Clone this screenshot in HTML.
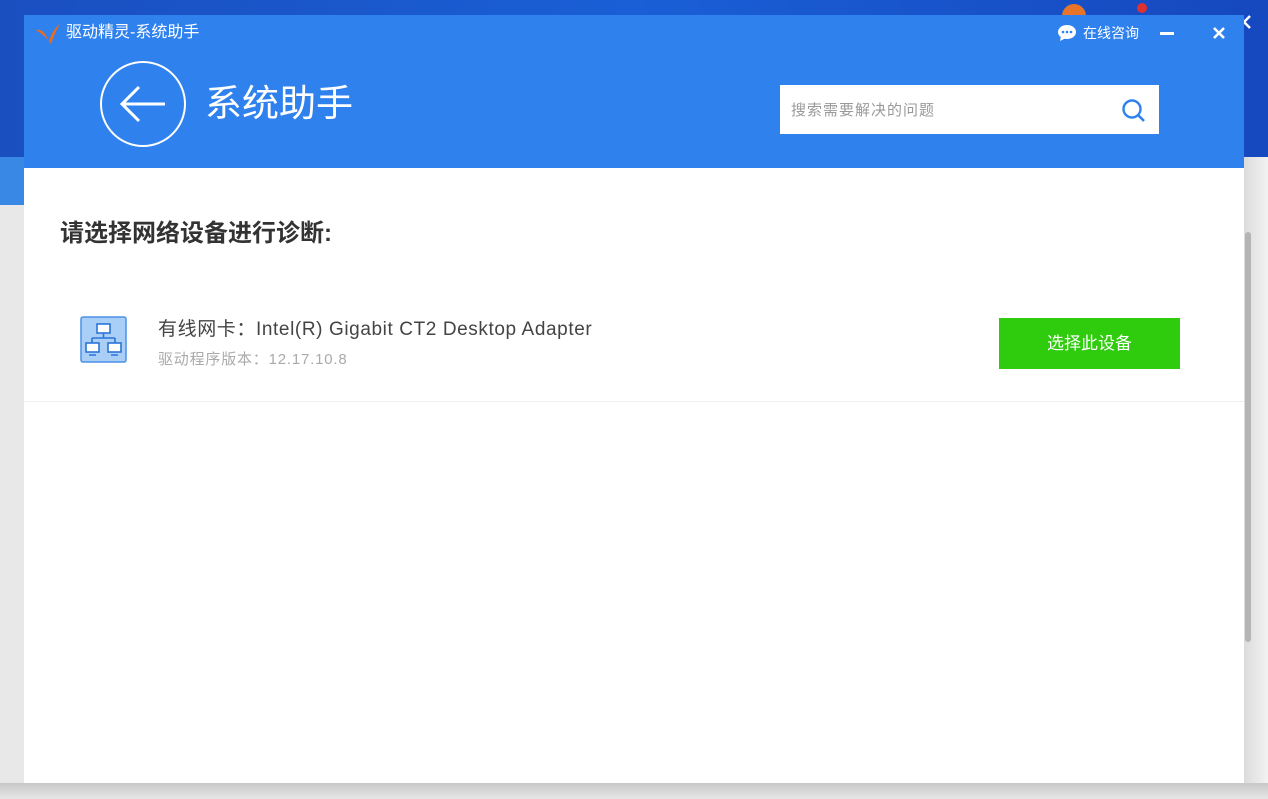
<!DOCTYPE html>
<html><head><meta charset="utf-8"><style>
*{margin:0;padding:0;box-sizing:border-box}
body{width:1268px;height:799px;overflow:hidden;position:relative;background:#e8e8e8;font-family:"Liberation Sans","Noto Sans CJK SC",sans-serif}
.bgtop{position:absolute;left:0;top:0;width:1268px;height:157px;background:linear-gradient(90deg,#1a4fc0,#1a5fd6 50%,#1648bf)}
.bgstrip{position:absolute;left:0;top:157px;width:24px;height:48px;background:#3a88e6}
.bgright{position:absolute;left:1244px;top:157px;width:24px;height:642px;background:linear-gradient(90deg,#dcdcdc,#f2f2f2)}
.bgbottom{position:absolute;left:0;top:783px;width:1268px;height:16px;background:linear-gradient(#c8c8c8,#e6e6e6)}
.scroll{position:absolute;left:1245px;top:232px;width:6px;height:410px;background:#b5b5b8;border-radius:3px}
.dlg{position:absolute;left:24px;top:15px;width:1220px;height:768px;background:#fff}
.hdr{position:absolute;left:0;top:0;width:1220px;height:153px;background:#2f82ee}
.title{position:absolute;left:42px;top:8px;color:#fff;font-size:16px;line-height:20px}
.back{position:absolute;left:76px;top:46px;width:86px;height:86px;border:2px solid #fff;border-radius:50%}
.big{position:absolute;left:181px;top:66px;color:#fff;font-size:37px;line-height:46px}
.search{position:absolute;left:756px;top:70px;width:379px;height:49px;background:#fff}
.search span{position:absolute;left:11px;top:14px;font-size:15px;color:#999;letter-spacing:1px}
.h2{position:absolute;left:36px;top:198px;font-size:24px;font-weight:bold;color:#333}
.name{position:absolute;left:134px;top:299px;font-size:19px;color:#444;letter-spacing:0.6px}
.ver{position:absolute;left:134px;top:333px;font-size:15px;color:#aaa;letter-spacing:0.8px}
.btn{position:absolute;left:975px;top:303px;width:181px;height:51px;background:#2ecc0c;color:#fff;font-size:17px;text-align:center;line-height:51px}
.line{position:absolute;left:0;top:386px;width:1220px;height:1px;background:#eceff3}
</style></head><body>
<div class="bgtop"></div><div class="bgstrip"></div><div class="bgright"></div><div class="bgbottom"></div>
<div class="scroll"></div>
<svg style="position:absolute;left:1240px;top:12px" width="14" height="20"><path d="M10 4 L4 10 L10 16" stroke="#fff" stroke-width="2.5" fill="none"/></svg>
<svg style="position:absolute;left:1060px;top:2px" width="100" height="14"><circle cx="14" cy="14" r="12" fill="#e8742a"/><circle cx="82" cy="6" r="5" fill="#e03030"/></svg>
<div class="dlg">
 <div class="hdr">
  <svg style="position:absolute;left:10px;top:7px" width="30" height="24"><path d="M2 8 Q10 6 15 20 Q18 8 26 2 Q20 12 17 22 Q12 14 2 8Z" fill="#f06a1a"/></svg>
  <div class="title">驱动精灵-系统助手</div>
  <svg style="position:absolute;left:1033px;top:9px" width="20" height="18"><ellipse cx="10" cy="8" rx="9" ry="7" fill="#fff"/><path d="M4 12 L3 17 L9 14Z" fill="#fff"/><circle cx="6" cy="8" r="1.3" fill="#2f82ee"/><circle cx="10" cy="8" r="1.3" fill="#2f82ee"/><circle cx="14" cy="8" r="1.3" fill="#2f82ee"/></svg>
  <div style="position:absolute;left:1059px;top:8px;color:#fff;font-size:14px">在线咨询</div>
  <div style="position:absolute;left:1136px;top:17px;width:14px;height:3px;background:#fff"></div>
  <svg style="position:absolute;left:1189px;top:12px" width="12" height="12"><path d="M1 1L11 11M11 1L1 11" stroke="#fff" stroke-width="2.6"/></svg>
  <div class="back"><svg width="82" height="82" style="position:absolute;left:0;top:0"><path d="M63 41H22M37 24L20 41L37 58" stroke="#fff" stroke-width="3" fill="none"/></svg></div>
  <div class="big">系统助手</div>
  <div class="search"><span>搜索需要解决的问题</span>
   <svg style="position:absolute;left:341px;top:13px" width="26" height="26"><circle cx="11" cy="11" r="8.5" stroke="#2f82ee" stroke-width="2.4" fill="none"/><path d="M17 17L23 23" stroke="#2f82ee" stroke-width="2.6"/></svg></div>
 </div>
 <div class="h2">请选择网络设备进行诊断:</div>
 <svg style="position:absolute;left:56px;top:301px" width="47" height="47"><rect x="1" y="1" width="45" height="45" fill="#a9cff7" stroke="#4a90e8" stroke-width="1.5" rx="2"/>
  <g stroke="#2b74d8" stroke-width="1.6" fill="#fff"><rect x="17" y="8" width="13" height="9"/><path d="M23.5 17V22M12 22H35M12 22V27M35 22V27" fill="none"/><rect x="6" y="27" width="13" height="9"/><rect x="28" y="27" width="13" height="9"/><path d="M9 39H16M31 39H38" fill="none"/></g></svg>
 <div class="name">有线网卡：Intel(R) Gigabit CT2 Desktop Adapter</div>
 <div class="ver">驱动程序版本：12.17.10.8</div>
 <div class="btn">选择此设备</div>
 <div class="line"></div>
</div>
</body></html>
